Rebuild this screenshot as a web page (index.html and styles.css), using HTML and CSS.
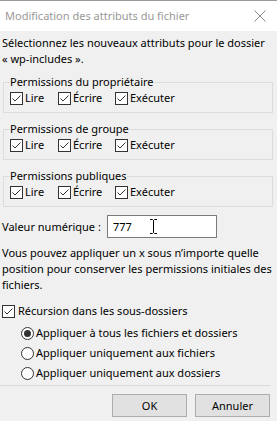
FILE: index.html
```html
<!DOCTYPE html>
<html lang="fr">
<head>
    <meta charset="UTF-8">
    <title>Modification des attributs du fichier</title>
    <link rel="stylesheet" href="styles.css">
</head>
<body>
    <svg class="defs" width="0" height="0">
        <symbol id="check" viewBox="0 0 13 13">
            <rect x="0.5" y="0.5" width="12" height="12" fill="#fff" stroke="#333"/>
            <path d="M2.5 6.5 L5 9 L10.5 3.5" fill="none" stroke="#333" stroke-width="1"/>
        </symbol>
    </svg>

    <div class="window">
        <div class="titlebar">
            <span class="title">Modification des attributs du fichier</span>
            <svg class="close" width="12" height="12" viewBox="0 0 12 12">
                <path d="M0.5 0.5 L11.5 11.5 M11.5 0.5 L0.5 11.5" stroke="#8f8f8f" stroke-width="1"/>
            </svg>
        </div>

        <div class="content">
            <p class="intro">Sélectionnez les nouveaux attributs pour le dossier<br>« wp-includes ».</p>

            <fieldset class="group">
                <legend>Permissions du propriétaire</legend>
                <div class="perms">
                    <label class="check"><svg class="cb"><use href="#check"/></svg>Lire</label>
                    <label class="check"><svg class="cb"><use href="#check"/></svg>Écrire</label>
                    <label class="check"><svg class="cb"><use href="#check"/></svg>Exécuter</label>
                </div>
            </fieldset>

            <fieldset class="group">
                <legend>Permissions de groupe</legend>
                <div class="perms">
                    <label class="check"><svg class="cb"><use href="#check"/></svg>Lire</label>
                    <label class="check"><svg class="cb"><use href="#check"/></svg>Écrire</label>
                    <label class="check"><svg class="cb"><use href="#check"/></svg>Exécuter</label>
                </div>
            </fieldset>

            <fieldset class="group">
                <legend>Permissions publiques</legend>
                <div class="perms">
                    <label class="check"><svg class="cb"><use href="#check"/></svg>Lire</label>
                    <label class="check"><svg class="cb"><use href="#check"/></svg>Écrire</label>
                    <label class="check"><svg class="cb"><use href="#check"/></svg>Exécuter</label>
                </div>
            </fieldset>

            <div class="num-row">
                <span class="num-label">Valeur numérique :</span>
                <div class="num-input">
                    777
                    <!-- mouse pointer -->
                    <svg class="ibeam" width="9" height="17" viewBox="0 0 9 17">
                        <path d="M1 1.5 H3.5 L4.5 2.5 L5.5 1.5 H8 M4.5 2.5 V14.5 M1 15.5 H3.5 L4.5 14.5 L5.5 15.5 H8" fill="none" stroke="#fff" stroke-width="3"/>
                        <path d="M1 1.5 H3.5 L4.5 2.5 L5.5 1.5 H8 M4.5 2.5 V14.5 M1 15.5 H3.5 L4.5 14.5 L5.5 15.5 H8" fill="none" stroke="#000" stroke-width="1"/>
                    </svg>
                </div>
            </div>

            <p class="note">Vous pouvez appliquer un x sous n’importe quelle<br>position pour conserver les permissions initiales des<br>fichiers.</p>

            <label class="check recurse"><svg class="cb"><use href="#check"/></svg>Récursion dans les sous-dossiers</label>

            <div class="radios">
                <label class="radio"><span class="dot checked"></span>Appliquer à tous les fichiers et dossiers</label>
                <label class="radio"><span class="dot"></span>Appliquer uniquement aux fichiers</label>
                <label class="radio"><span class="dot"></span>Appliquer uniquement aux dossiers</label>
            </div>
        </div>

        <div class="footer">
            <button class="btn">OK</button>
            <button class="btn">Annuler</button>
        </div>
    </div>
</body>
</html>
```

FILE: styles.css
```css
body {
    margin: 0;
    background: #f0f0f0;
    font-family: "Noto Sans", "Open Sans", sans-serif;
    font-size: 11px;
    color: #000;
    line-height: 16px;
    white-space: nowrap;
    overflow: hidden;
}
.defs { position: absolute; }
.window {
    border-top: 1px solid #9a9a9a;
    height: 420px;
}
.titlebar {
    height: 30px;
    background: #fff;
    display: flex;
    align-items: center;
    justify-content: space-between;
    padding: 0 11px 0 5px;
}
.title { color: #999; }
.close { display: block; }

.content { padding: 4px 4px 0 2px; }
.intro { margin: 0; }

.group {
    margin: 7px 0 0 1px;
    padding: 0 6px 6px 6px;
    border: 1px solid #dcdcdc;
}
.group + .group { margin-top: 8px; }
.group legend { padding: 0; }

.perms { display: flex; }
.check {
    display: flex;
    align-items: center;
    gap: 2px;
}
.perms .check:nth-child(1) { width: 48px; }
.perms .check:nth-child(2) { width: 57px; }
.cb { width: 13px; height: 13px; }

.num-row {
    display: flex;
    align-items: center;
    margin-top: 8px;
}
.num-label { width: 105px; }
.num-input {
    position: relative;
    width: 103px;
    height: 21px;
    line-height: 21px;
    padding-left: 5px;
    background: #fff;
    border: 1px solid #7a7a7a;
}
.ibeam {
    position: absolute;
    left: 41px;
    top: 2px;
}

.note { margin: 7px 0 0 0; }

.recurse { margin-top: 10px; gap: 3px; }

.radios { margin-top: 4px; padding-left: 19px; }
.radio {
    display: flex;
    align-items: center;
    gap: 2px;
    height: 20px;
}
.dot {
    width: 11px;
    height: 11px;
    border: 1px solid #333;
    border-radius: 50%;
    background: #fff;
    display: flex;
    align-items: center;
    justify-content: center;
}
.dot.checked::after {
    content: "";
    width: 7px;
    height: 7px;
    border-radius: 50%;
    background: #333;
}

.footer {
    margin-top: 2px;
    margin-right: 7px;
    border-top: 1px solid #dadada;
    padding-top: 8px;
    display: flex;
    justify-content: flex-end;
    gap: 8px;
}
.btn {
    width: 75px;
    height: 23px;
    font-family: inherit;
    font-size: 11px;
    background: #e1e1e1;
    border: 1px solid #adadad;
    padding: 0;
}
```
